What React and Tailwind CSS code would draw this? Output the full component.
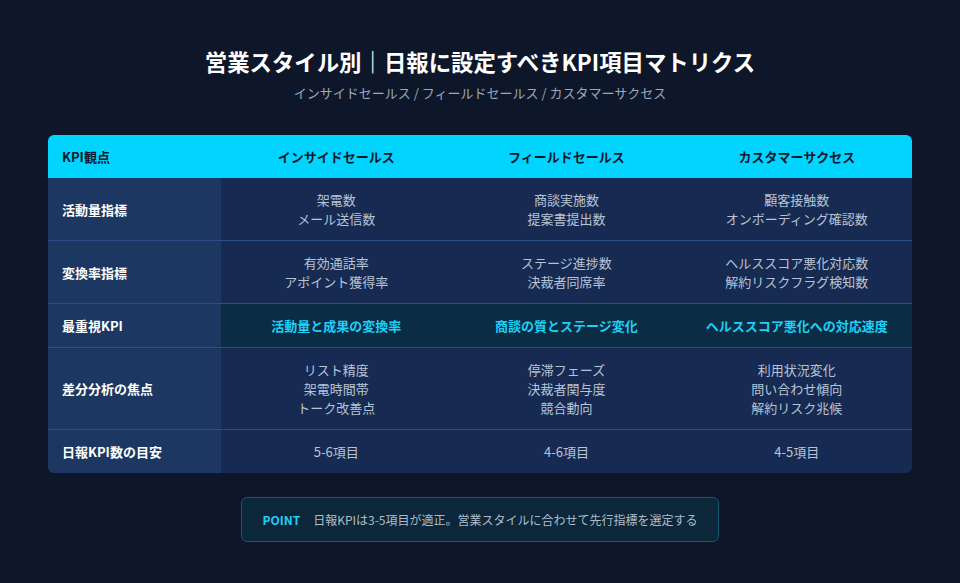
import React from 'react'

const font = { fontFamily: '"Noto Sans CJK JP", "Noto Sans", sans-serif' }

const columns = ['インサイドセールス', 'フィールドセールス', 'カスタマーサクセス']

const rows = [
  { label: '活動量指標', cells: [['架電数', 'メール送信数'], ['商談実施数', '提案書提出数'], ['顧客接触数', 'オンボーディング確認数']] },
  { label: '変換率指標', cells: [['有効通話率', 'アポイント獲得率'], ['ステージ進捗数', '決裁者同席率'], ['ヘルススコア悪化対応数', '解約リスクフラグ検知数']] },
  { label: '最重視KPI', highlight: true, cells: [['活動量と成果の変換率'], ['商談の質とステージ変化'], ['ヘルススコア悪化への対応速度']] },
  { label: '差分分析の焦点', cells: [['リスト精度', '架電時間帯', 'トーク改善点'], ['停滞フェーズ', '決裁者関与度', '競合動向'], ['利用状況変化', '問い合わせ傾向', '解約リスク兆候']] },
  { label: '日報KPI数の目安', cells: [['5-6項目'], ['4-6項目'], ['4-5項目']] },
]

export default function App() {
  return (
    <div className="w-[960px] h-[583px] bg-[#0e1729] flex flex-col items-center pt-[46px]" style={font}>
      <h1 className="text-[22.4px] leading-[30px] font-bold text-white">営業スタイル別｜日報に設定すべきKPI項目マトリクス</h1>
      <p className="mt-[8px] text-[13px] leading-[18px] text-[#9aa8bd]">インサイドセールス / フィールドセールス / カスタマーサクセス</p>

      <div className="mt-[33px] w-[864px] rounded-md overflow-hidden grid grid-cols-[173px_1fr_1fr_1fr] text-[13px] leading-[19px]">
        <div className="bg-[#00d4ff] px-[14px] py-3 font-bold text-[#0f1a2b]">KPI観点</div>
        {columns.map(c => (
          <div key={c} className="bg-[#00d4ff] py-3 text-center font-bold text-[#0f1a2b]">{c}</div>
        ))}
        {rows.map((r, i) => (
          <React.Fragment key={r.label}>
            <div className={`bg-[#1c3761] px-[14px] py-3 flex items-center font-bold text-white ${i > 0 ? 'border-t border-[#2c4d85]' : ''}`}>{r.label}</div>
            {r.cells.map((lines, j) => (
              <div key={j} className={`py-3 flex flex-col items-center justify-center text-center ${i > 0 ? 'border-t border-[#2c4d85]' : ''} ${r.highlight ? 'bg-[#0b2c45] text-[#1fd0f5] font-bold' : 'bg-[#172b52] text-[#b8c4d6]'}`}>
                {lines.map(l => <div key={l}>{l}</div>)}
              </div>
            ))}
          </React.Fragment>
        ))}
      </div>

      <div className="mt-[24px] h-[45px] px-[20px] flex items-center gap-[13px] rounded-md border border-[#1a5670] bg-[#0b2739] text-[12px]">
        <span className="font-bold text-[#1fd0f5]">POINT</span>
        <span className="text-[#b0bccd]">日報KPIは3-5項目が適正。営業スタイルに合わせて先行指標を選定する</span>
      </div>
    </div>
  )
}
